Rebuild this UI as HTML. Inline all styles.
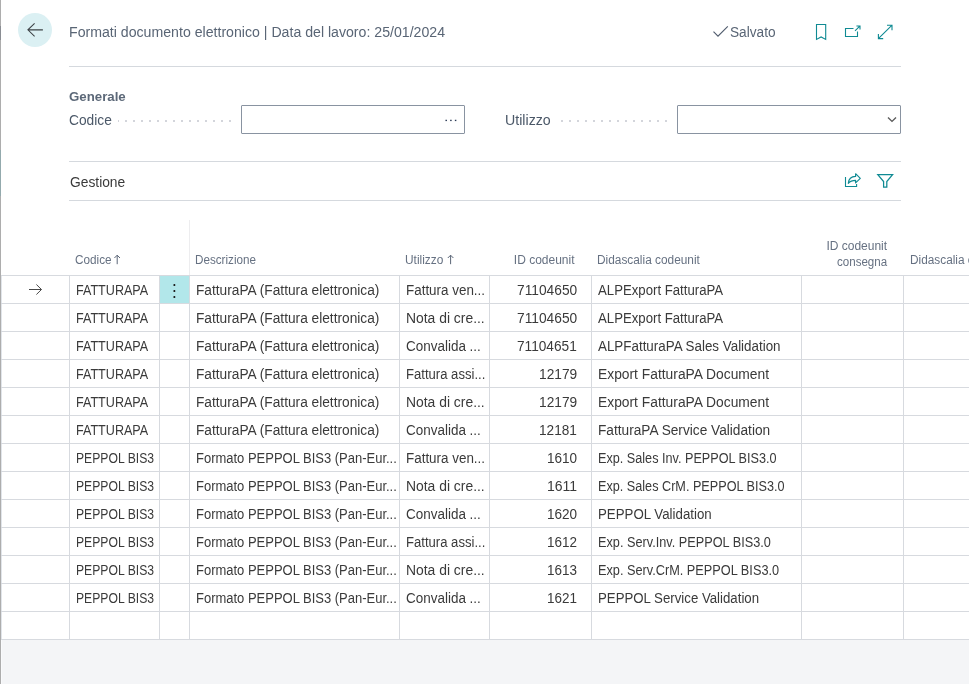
<!DOCTYPE html>
<html><head><meta charset="utf-8"><title>Formati documento elettronico</title><style>
html,body{margin:0;padding:0;overflow:hidden}
html{width:969px;height:684px}
body{width:969px;height:684px;overflow:hidden;background:#fff;position:relative;font-family:"Liberation Sans", sans-serif;}
.t{position:absolute;white-space:pre;line-height:20px;font-family:"Liberation Sans", sans-serif;transform-origin:0 0}
.a{position:absolute}
</style></head>
<body>
<div class="a" style="left:0;top:640px;width:969px;height:44px;background:#f4f5f7"></div>
<div class="a" style="left:0;top:0;width:1px;height:684px;background:#adadad"></div>
<div class="a" style="left:0;top:26px;width:1px;height:14px;background:#8a8d93"></div>
<div class="a" style="left:0;top:150px;width:1px;height:46px;background:#93aaad"></div>
<div class="a" style="left:1px;top:275px;width:1px;height:365px;background:#e1e5ea"></div>
<div class="a" style="left:1px;top:640px;width:1px;height:44px;background:#f9fafc"></div>
<div class="a" style="left:18px;top:13px;width:34px;height:34px;border-radius:50%;background:#dbf0f3"></div>
<div class="a" style="left:69px;top:66px;width:832px;height:1px;background:#d5d9de"></div>
<div class="a" style="left:69px;top:161px;width:832px;height:1px;background:#d5d9de"></div>
<div class="a" style="left:69px;top:200px;width:832px;height:1px;background:#d5d9de"></div>
<div class="a" style="left:241px;top:105px;width:222px;height:27px;border:1px solid #8993a1;border-radius:1px;background:#fff"></div>
<div class="a" style="left:677px;top:105px;width:222px;height:27px;border:1px solid #8993a1;border-radius:1px;background:#fff"></div>
<div class="a" style="left:118px;top:120px;width:1px;height:2px;background:#d3d5db"></div>
<div class="a" style="left:125px;top:120px;width:2px;height:2px;background:#d3d5db"></div>
<div class="a" style="left:133px;top:120px;width:2px;height:2px;background:#d3d5db"></div>
<div class="a" style="left:141px;top:120px;width:2px;height:2px;background:#d3d5db"></div>
<div class="a" style="left:149px;top:120px;width:2px;height:2px;background:#d3d5db"></div>
<div class="a" style="left:157px;top:120px;width:2px;height:2px;background:#d3d5db"></div>
<div class="a" style="left:165px;top:120px;width:2px;height:2px;background:#d3d5db"></div>
<div class="a" style="left:173px;top:120px;width:2px;height:2px;background:#d3d5db"></div>
<div class="a" style="left:181px;top:120px;width:2px;height:2px;background:#d3d5db"></div>
<div class="a" style="left:189px;top:120px;width:2px;height:2px;background:#d3d5db"></div>
<div class="a" style="left:197px;top:120px;width:2px;height:2px;background:#d3d5db"></div>
<div class="a" style="left:205px;top:120px;width:2px;height:2px;background:#d3d5db"></div>
<div class="a" style="left:213px;top:120px;width:2px;height:2px;background:#d3d5db"></div>
<div class="a" style="left:221px;top:120px;width:2px;height:2px;background:#d3d5db"></div>
<div class="a" style="left:229px;top:120px;width:2px;height:2px;background:#d3d5db"></div>
<div class="a" style="left:561px;top:120px;width:2px;height:2px;background:#d3d5db"></div>
<div class="a" style="left:569px;top:120px;width:2px;height:2px;background:#d3d5db"></div>
<div class="a" style="left:577px;top:120px;width:2px;height:2px;background:#d3d5db"></div>
<div class="a" style="left:585px;top:120px;width:2px;height:2px;background:#d3d5db"></div>
<div class="a" style="left:593px;top:120px;width:2px;height:2px;background:#d3d5db"></div>
<div class="a" style="left:601px;top:120px;width:2px;height:2px;background:#d3d5db"></div>
<div class="a" style="left:609px;top:120px;width:2px;height:2px;background:#d3d5db"></div>
<div class="a" style="left:617px;top:120px;width:2px;height:2px;background:#d3d5db"></div>
<div class="a" style="left:625px;top:120px;width:2px;height:2px;background:#d3d5db"></div>
<div class="a" style="left:633px;top:120px;width:2px;height:2px;background:#d3d5db"></div>
<div class="a" style="left:641px;top:120px;width:2px;height:2px;background:#d3d5db"></div>
<div class="a" style="left:649px;top:120px;width:2px;height:2px;background:#d3d5db"></div>
<div class="a" style="left:657px;top:120px;width:2px;height:2px;background:#d3d5db"></div>
<div class="a" style="left:665px;top:120px;width:2px;height:2px;background:#d3d5db"></div>
<div class="a" style="left:189px;top:220px;width:1px;height:55px;background:#ededef"></div>
<div class="a" style="left:160px;top:276px;width:29px;height:27px;background:#b2e7ea"></div>
<div class="a" style="left:1px;top:275px;width:968px;height:1px;background:#d7dadf"></div>
<div class="a" style="left:1px;top:303px;width:968px;height:1px;background:#d7dadf"></div>
<div class="a" style="left:1px;top:331px;width:968px;height:1px;background:#d7dadf"></div>
<div class="a" style="left:1px;top:359px;width:968px;height:1px;background:#d7dadf"></div>
<div class="a" style="left:1px;top:387px;width:968px;height:1px;background:#d7dadf"></div>
<div class="a" style="left:1px;top:415px;width:968px;height:1px;background:#d7dadf"></div>
<div class="a" style="left:1px;top:443px;width:968px;height:1px;background:#d7dadf"></div>
<div class="a" style="left:1px;top:471px;width:968px;height:1px;background:#d7dadf"></div>
<div class="a" style="left:1px;top:499px;width:968px;height:1px;background:#d7dadf"></div>
<div class="a" style="left:1px;top:527px;width:968px;height:1px;background:#d7dadf"></div>
<div class="a" style="left:1px;top:555px;width:968px;height:1px;background:#d7dadf"></div>
<div class="a" style="left:1px;top:583px;width:968px;height:1px;background:#d7dadf"></div>
<div class="a" style="left:1px;top:611px;width:968px;height:1px;background:#d7dadf"></div>
<div class="a" style="left:1px;top:639px;width:968px;height:1px;background:#d7dadf"></div>
<div class="a" style="left:69px;top:275px;width:1px;height:365px;background:#d7dadf"></div>
<div class="a" style="left:159px;top:275px;width:1px;height:365px;background:#d7dadf"></div>
<div class="a" style="left:189px;top:275px;width:1px;height:365px;background:#d7dadf"></div>
<div class="a" style="left:399px;top:275px;width:1px;height:365px;background:#d7dadf"></div>
<div class="a" style="left:489px;top:275px;width:1px;height:365px;background:#d7dadf"></div>
<div class="a" style="left:591px;top:275px;width:1px;height:365px;background:#d7dadf"></div>
<div class="a" style="left:801px;top:275px;width:1px;height:365px;background:#d7dadf"></div>
<div class="a" style="left:903px;top:275px;width:1px;height:365px;background:#d7dadf"></div>
<svg class="a" style="left:0;top:0" width="969" height="684" viewBox="0 0 969 684" fill="none">
<path d="M42.9 29.85H28.3M34.6 23.3L27.9 29.85L34.6 36.4" stroke="#3d4246" stroke-width="1.05"/>
<path d="M713.5 31.7L718 36.2L727.8 26.4" stroke="#505c6d" stroke-width="1.15"/>
<path d="M816.5 39.4V24.5H825.7V39.4L821.1 36.9Z" stroke="#0f8a93" stroke-width="1.1" stroke-linejoin="miter"/>
<path d="M853.5 28.5H845.5V36.5H857.5V31.5" stroke="#0f8a93" stroke-width="1.1"/>
<path d="M855 30.8L859.8 26.2M856.4 26H860V29.5" stroke="#0f8a93" stroke-width="1.1"/>
<path d="M878.6 38.4L891.8 25.4M887 25.2H892V30.2M878.4 34V38.6H883.2" stroke="#0f8a93" stroke-width="1.1"/>
<path d="M845.5 177V186.5H856.6V184" stroke="#0f8a93" stroke-width="1.1"/>
<path d="M848.3 183.3C848.6 179 851.6 176.5 855.6 176.4V173.7L860.3 178.4L855.6 182.9V180.3C852.4 180.3 850 181.2 848.3 183.3Z" stroke="#0f8a93" stroke-width="1.15" stroke-linejoin="round"/>
<path d="M877.8 174.6H892.6L886.8 181.6V187.2H883.6V181.6Z" stroke="#0f8a93" stroke-width="1.25" stroke-linejoin="miter"/>
<rect x="445.45" y="119.75" width="1.5" height="1.35" fill="#2a3a55"/>
<rect x="450.15" y="119.75" width="1.5" height="1.35" fill="#2a3a55"/>
<rect x="454.85" y="119.75" width="1.5" height="1.35" fill="#2a3a55"/>
<path d="M888 117.6L892 121.4L896 117.6" stroke="#5a5a5a" stroke-width="1.4"/>
<path d="M29 289.5H41.4M36.4 284.5L41.5 289.5L36.4 294.5" stroke="#484848" stroke-width="1"/>
<rect x="173.5" y="283.95" width="1.75" height="2.1" rx="0.4" fill="#1f1f1f"/>
<rect x="173.5" y="289.95" width="1.75" height="2.1" rx="0.4" fill="#1f1f1f"/>
<rect x="173.5" y="295.95" width="1.75" height="2.1" rx="0.4" fill="#1f1f1f"/>
<path d="M117.2 264.2V255.2M114.4 258L117.2 255.2L120.0 258" stroke="#5b6677" stroke-width="1"/>
<path d="M450.6 264.2V255.2M447.8 258L450.6 255.2L453.40000000000003 258" stroke="#5b6677" stroke-width="1"/>
</svg>
<div class="a" style="left:0;top:0;width:969px;height:684px;overflow:hidden;will-change:transform">
<span class="t" style="left:69.12px;top:22px;font-size:14px;color:#596575;transform:scaleX(1.0094);">Formati documento elettronico | Data del lavoro: 25/01/2024</span>
<span class="t" style="left:729.85px;top:22px;font-size:14px;color:#596575;transform:scaleX(0.9763);">Salvato</span>
<span class="t" style="left:68.91px;top:87px;font-size:13.5px;color:#5c6878;transform:scaleX(0.9820);font-weight:700;">Generale</span>
<span class="t" style="left:68.69px;top:110px;font-size:14px;color:#4b5868;transform:scaleX(0.9823);">Codice</span>
<span class="t" style="left:504.99px;top:110px;font-size:14px;color:#4b5868;transform:scaleX(1.0131);">Utilizzo</span>
<span class="t" style="left:70.04px;top:172px;font-size:14px;color:#3a3a3a;transform:scaleX(0.9852);">Gestione</span>
<span class="t" style="left:75.15px;top:250px;font-size:12px;color:#667182;transform:scaleX(0.9781);">Codice</span>
<span class="t" style="left:195.07px;top:250px;font-size:12px;color:#667182;transform:scaleX(0.9731);">Descrizione</span>
<span class="t" style="left:405.01px;top:250px;font-size:12px;color:#667182;transform:scaleX(0.9919);">Utilizzo</span>
<span class="t" style="left:513.83px;top:250px;font-size:12px;color:#667182;">ID codeunit</span>
<span class="t" style="left:596.94px;top:250px;font-size:12px;color:#667182;transform:scaleX(0.9885);">Didascalia codeunit</span>
<span class="t" style="left:826.38px;top:236px;font-size:12px;color:#667182;">ID codeunit</span>
<span class="t" style="left:837.32px;top:252px;font-size:12px;color:#667182;transform:scaleX(0.9638);">consegna</span>
<span class="t" style="left:909.94px;top:250px;font-size:12px;color:#667182;transform:scaleX(0.9853);">Didascalia codeunit</span>
<span class="t" style="left:75.98px;top:280px;font-size:14px;color:#3a3a3a;transform:scaleX(0.8981);">FATTURAPA</span>
<span class="t" style="left:195.94px;top:280px;font-size:14px;color:#3a3a3a;transform:scaleX(0.9793);">FatturaPA (Fattura elettronica)</span>
<span class="t" style="left:405.95px;top:280px;font-size:14px;color:#3a3a3a;transform:scaleX(0.9581);">Fattura ven...</span>
<span class="t" style="left:516.60px;top:280px;font-size:14px;color:#3a3a3a;transform:scaleX(0.9825);">71104650</span>
<span class="t" style="left:598.35px;top:280px;font-size:14px;color:#3a3a3a;transform:scaleX(0.9423);">ALPExport FatturaPA</span>
<span class="t" style="left:75.98px;top:308px;font-size:14px;color:#3a3a3a;transform:scaleX(0.8981);">FATTURAPA</span>
<span class="t" style="left:195.94px;top:308px;font-size:14px;color:#3a3a3a;transform:scaleX(0.9793);">FatturaPA (Fattura elettronica)</span>
<span class="t" style="left:405.71px;top:308px;font-size:14px;color:#3a3a3a;transform:scaleX(0.9917);">Nota di cre...</span>
<span class="t" style="left:516.60px;top:308px;font-size:14px;color:#3a3a3a;transform:scaleX(0.9825);">71104650</span>
<span class="t" style="left:598.35px;top:308px;font-size:14px;color:#3a3a3a;transform:scaleX(0.9423);">ALPExport FatturaPA</span>
<span class="t" style="left:75.98px;top:336px;font-size:14px;color:#3a3a3a;transform:scaleX(0.8981);">FATTURAPA</span>
<span class="t" style="left:195.94px;top:336px;font-size:14px;color:#3a3a3a;transform:scaleX(0.9793);">FatturaPA (Fattura elettronica)</span>
<span class="t" style="left:406.08px;top:336px;font-size:14px;color:#3a3a3a;transform:scaleX(0.9618);">Convalida ...</span>
<span class="t" style="left:517.13px;top:336px;font-size:14px;color:#3a3a3a;transform:scaleX(0.9755);">71104651</span>
<span class="t" style="left:598.30px;top:336px;font-size:14px;color:#3a3a3a;transform:scaleX(0.9562);">ALPFatturaPA Sales Validation</span>
<span class="t" style="left:75.98px;top:364px;font-size:14px;color:#3a3a3a;transform:scaleX(0.8981);">FATTURAPA</span>
<span class="t" style="left:195.94px;top:364px;font-size:14px;color:#3a3a3a;transform:scaleX(0.9793);">FatturaPA (Fattura elettronica)</span>
<span class="t" style="left:405.96px;top:364px;font-size:14px;color:#3a3a3a;transform:scaleX(0.9350);">Fattura assi...</span>
<span class="t" style="left:539.31px;top:364px;font-size:14px;color:#3a3a3a;transform:scaleX(0.9803);">12179</span>
<span class="t" style="left:597.64px;top:364px;font-size:14px;color:#3a3a3a;transform:scaleX(0.9874);">Export FatturaPA Document</span>
<span class="t" style="left:75.98px;top:392px;font-size:14px;color:#3a3a3a;transform:scaleX(0.8981);">FATTURAPA</span>
<span class="t" style="left:195.94px;top:392px;font-size:14px;color:#3a3a3a;transform:scaleX(0.9793);">FatturaPA (Fattura elettronica)</span>
<span class="t" style="left:405.71px;top:392px;font-size:14px;color:#3a3a3a;transform:scaleX(0.9917);">Nota di cre...</span>
<span class="t" style="left:539.31px;top:392px;font-size:14px;color:#3a3a3a;transform:scaleX(0.9803);">12179</span>
<span class="t" style="left:597.64px;top:392px;font-size:14px;color:#3a3a3a;transform:scaleX(0.9874);">Export FatturaPA Document</span>
<span class="t" style="left:75.98px;top:420px;font-size:14px;color:#3a3a3a;transform:scaleX(0.8981);">FATTURAPA</span>
<span class="t" style="left:195.94px;top:420px;font-size:14px;color:#3a3a3a;transform:scaleX(0.9793);">FatturaPA (Fattura elettronica)</span>
<span class="t" style="left:406.08px;top:420px;font-size:14px;color:#3a3a3a;transform:scaleX(0.9618);">Convalida ...</span>
<span class="t" style="left:539.37px;top:420px;font-size:14px;color:#3a3a3a;transform:scaleX(0.9724);">12181</span>
<span class="t" style="left:597.65px;top:420px;font-size:14px;color:#3a3a3a;transform:scaleX(0.9774);">FatturaPA Service Validation</span>
<span class="t" style="left:76.00px;top:448px;font-size:14px;color:#3a3a3a;transform:scaleX(0.8696);">PEPPOL BIS3</span>
<span class="t" style="left:195.97px;top:448px;font-size:14px;color:#3a3a3a;transform:scaleX(0.9273);">Formato PEPPOL BIS3 (Pan-Eur...</span>
<span class="t" style="left:405.95px;top:448px;font-size:14px;color:#3a3a3a;transform:scaleX(0.9581);">Fattura ven...</span>
<span class="t" style="left:547.03px;top:448px;font-size:14px;color:#3a3a3a;transform:scaleX(0.9678);">1610</span>
<span class="t" style="left:597.72px;top:448px;font-size:14px;color:#3a3a3a;transform:scaleX(0.9035);">Exp. Sales Inv. PEPPOL BIS3.0</span>
<span class="t" style="left:76.00px;top:476px;font-size:14px;color:#3a3a3a;transform:scaleX(0.8696);">PEPPOL BIS3</span>
<span class="t" style="left:195.97px;top:476px;font-size:14px;color:#3a3a3a;transform:scaleX(0.9273);">Formato PEPPOL BIS3 (Pan-Eur...</span>
<span class="t" style="left:405.71px;top:476px;font-size:14px;color:#3a3a3a;transform:scaleX(0.9917);">Nota di cre...</span>
<span class="t" style="left:547.00px;top:476px;font-size:14px;color:#3a3a3a;">1611</span>
<span class="t" style="left:597.72px;top:476px;font-size:14px;color:#3a3a3a;transform:scaleX(0.9038);">Exp. Sales CrM. PEPPOL BIS3.0</span>
<span class="t" style="left:76.00px;top:504px;font-size:14px;color:#3a3a3a;transform:scaleX(0.8696);">PEPPOL BIS3</span>
<span class="t" style="left:195.97px;top:504px;font-size:14px;color:#3a3a3a;transform:scaleX(0.9273);">Formato PEPPOL BIS3 (Pan-Eur...</span>
<span class="t" style="left:406.08px;top:504px;font-size:14px;color:#3a3a3a;transform:scaleX(0.9618);">Convalida ...</span>
<span class="t" style="left:547.03px;top:504px;font-size:14px;color:#3a3a3a;transform:scaleX(0.9678);">1620</span>
<span class="t" style="left:597.68px;top:504px;font-size:14px;color:#3a3a3a;transform:scaleX(0.9486);">PEPPOL Validation</span>
<span class="t" style="left:76.00px;top:532px;font-size:14px;color:#3a3a3a;transform:scaleX(0.8696);">PEPPOL BIS3</span>
<span class="t" style="left:195.97px;top:532px;font-size:14px;color:#3a3a3a;transform:scaleX(0.9273);">Formato PEPPOL BIS3 (Pan-Eur...</span>
<span class="t" style="left:405.96px;top:532px;font-size:14px;color:#3a3a3a;transform:scaleX(0.9350);">Fattura assi...</span>
<span class="t" style="left:547.04px;top:532px;font-size:14px;color:#3a3a3a;transform:scaleX(0.9625);">1612</span>
<span class="t" style="left:597.72px;top:532px;font-size:14px;color:#3a3a3a;transform:scaleX(0.9077);">Exp. Serv.Inv. PEPPOL BIS3.0</span>
<span class="t" style="left:76.00px;top:560px;font-size:14px;color:#3a3a3a;transform:scaleX(0.8696);">PEPPOL BIS3</span>
<span class="t" style="left:195.97px;top:560px;font-size:14px;color:#3a3a3a;transform:scaleX(0.9273);">Formato PEPPOL BIS3 (Pan-Eur...</span>
<span class="t" style="left:405.71px;top:560px;font-size:14px;color:#3a3a3a;transform:scaleX(0.9917);">Nota di cre...</span>
<span class="t" style="left:547.04px;top:560px;font-size:14px;color:#3a3a3a;transform:scaleX(0.9622);">1613</span>
<span class="t" style="left:597.71px;top:560px;font-size:14px;color:#3a3a3a;transform:scaleX(0.9091);">Exp. Serv.CrM. PEPPOL BIS3.0</span>
<span class="t" style="left:76.00px;top:588px;font-size:14px;color:#3a3a3a;transform:scaleX(0.8696);">PEPPOL BIS3</span>
<span class="t" style="left:195.97px;top:588px;font-size:14px;color:#3a3a3a;transform:scaleX(0.9273);">Formato PEPPOL BIS3 (Pan-Eur...</span>
<span class="t" style="left:406.08px;top:588px;font-size:14px;color:#3a3a3a;transform:scaleX(0.9618);">Convalida ...</span>
<span class="t" style="left:547.04px;top:588px;font-size:14px;color:#3a3a3a;transform:scaleX(0.9608);">1621</span>
<span class="t" style="left:597.68px;top:588px;font-size:14px;color:#3a3a3a;transform:scaleX(0.9449);">PEPPOL Service Validation</span>
</div>
</body></html>
